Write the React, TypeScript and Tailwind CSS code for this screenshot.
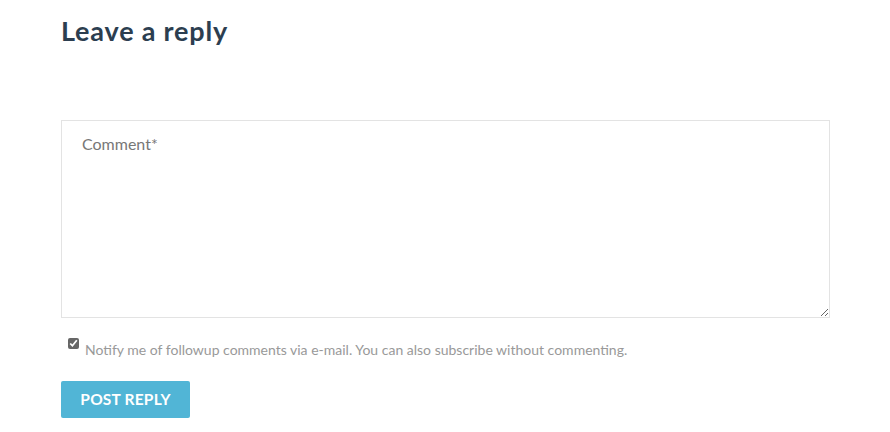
export default function App() {
  return (
    <div className="min-h-[432px] w-[890px] bg-white font-['Lato',sans-serif]">
      <div className="px-[61px] pt-[14px]">
        <h2 className="text-[27px] font-bold leading-[34px] tracking-[0.8px] text-[#2c3e50]">Leave a reply</h2>
        <form className="mt-[72px] w-[769px]">
          <textarea
            className="block h-[198px] w-full resize-y rounded-none border border-[#e3e3e3] px-[20px] py-[11px] text-[16px] text-[#555] outline-none placeholder:text-[#777]"
            placeholder="Comment*"
          />
          <label className="mt-[19px] flex items-start gap-[6px] pl-[7px] text-[14px] leading-[20px] text-[#999]">
            <input type="checkbox" defaultChecked className="mt-[1px] h-[11px] w-[11px] accent-[#666]" />
            <span className="mt-[3px]">Notify me of followup comments via e-mail. You can also subscribe without commenting.</span>
          </label>
          <button
            type="button"
            className="mt-[21px] h-[37px] w-[129px] rounded-[2px] bg-[#51b5d6] text-[15.5px] font-bold tracking-[0.2px] text-white"
          >
            POST REPLY
          </button>
        </form>
      </div>
    </div>
  );
}
